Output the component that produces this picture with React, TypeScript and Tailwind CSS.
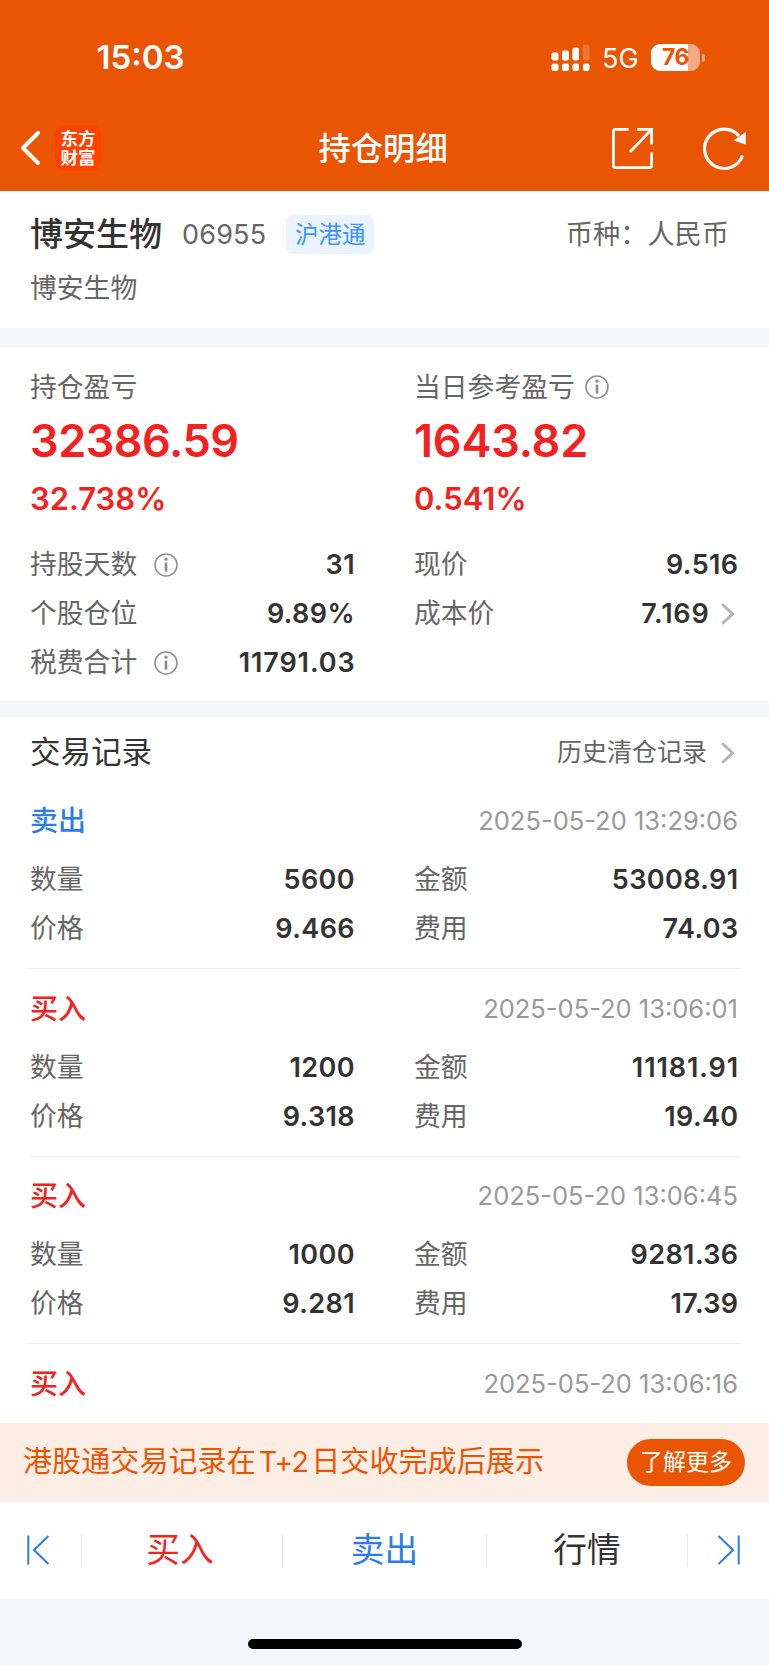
import type { ReactNode } from 'react';

type Trade = {
  side: 'buy' | 'sell';
  time: string;
  qty?: string;
  amount?: string;
  price?: string;
  fee?: string;
};

const trades: Trade[] = [
  { side: 'sell', time: '2025-05-20 13:29:06', qty: '5600', amount: '53008.91', price: '9.466', fee: '74.03' },
  { side: 'buy', time: '2025-05-20 13:06:01', qty: '1200', amount: '11181.91', price: '9.318', fee: '19.40' },
  { side: 'buy', time: '2025-05-20 13:06:45', qty: '1000', amount: '9281.36', price: '9.281', fee: '17.39' },
  { side: 'buy', time: '2025-05-20 13:06:16' },
];

function InfoIcon() {
  return (
    <svg width="24" height="24" viewBox="0 0 24 24" fill="none" stroke="#8c8c8c">
      <circle cx="12" cy="12" r="11" strokeWidth="1.5" />
      <path d="M12 9.6v9" strokeWidth="2.6" />
      <circle cx="12" cy="6.2" r="1.6" fill="#8c8c8c" stroke="none" />
    </svg>
  );
}

function Chevron() {
  return (
    <svg width="14" height="22" viewBox="0 0 14 22" fill="none" stroke="#b3b3b3" strokeWidth="2.8" strokeLinecap="round">
      <path d="M2 2l9.6 9L2 20" />
    </svg>
  );
}

// Values with many narrow "1" digits get wider tracking so they stay legible.
function trackingFor(value: string) {
  const ones = value.split('1').length - 1;
  return ones >= 3 ? 'tracking-[0.9px] -mr-[0.5px]' : 'tracking-[0.4px]';
}

function Field({ label, value, info, link }: { label: string; value: string; info?: boolean; link?: boolean }) {
  return (
    <div className="flex h-[49px] items-center">
      <span className="text-[26.8px] text-[#666]">{label}</span>
      {info && (
        <span className="ml-[17px]">
          <InfoIcon />
        </span>
      )}
      <span className={`ml-auto text-[27px] font-semibold text-[#333] ${link ? 'tracking-[0.8px]' : trackingFor(value)}`}>{value}</span>
      {link && (
        <span className="mr-[4px] ml-[11px]">
          <Chevron />
        </span>
      )}
    </div>
  );
}

function Columns({ left, right }: { left: ReactNode; right: ReactNode }) {
  return (
    <div className="grid grid-cols-[325px_324.5px] gap-x-[59px] pl-[30px]">
      <div>{left}</div>
      <div>{right}</div>
    </div>
  );
}

function TradeRow({ trade }: { trade: Trade }) {
  const color = trade.side === 'buy' ? 'text-[#f52121]' : 'text-[#2b7de9]';
  return (
    <div className="h-[187.5px] shrink-0">
      <div className="flex h-[81px] items-center justify-between pt-[13px] pr-[31px] pl-[30px]">
        <span className={`text-[28px] font-medium ${color}`}>{trade.side === 'buy' ? '买入' : '卖出'}</span>
        <span className="text-[25.5px] text-[#999]">{trade.time}</span>
      </div>
      {trade.qty && trade.amount && trade.price && trade.fee && (
        <>
          <Columns
            left={
              <>
                <Field label="数量" value={trade.qty} />
                <Field label="价格" value={trade.price} />
              </>
            }
            right={
              <>
                <Field label="金额" value={trade.amount} />
                <Field label="费用" value={trade.fee} />
              </>
            }
          />
          <div className="mx-[29px] mt-[15px] h-px bg-[#eeeeee]" />
        </>
      )}
    </div>
  );
}

function StatusBar() {
  return (
    <div className="flex h-[115px] items-center pl-[96.5px] text-white">
      <span className="text-[33px] font-semibold">15:03</span>
      <svg className="ml-auto" width="39" height="28" viewBox="0 0 39 28" fill="#fff">
        <rect x="0.5" y="8.5" width="7" height="8" rx="2" />
        <rect x="11" y="6.5" width="7" height="10" rx="2" />
        <rect x="21.5" y="3.5" width="6.5" height="13" rx="2" />
        <rect x="32" y="0.5" width="6.5" height="16" rx="2" fillOpacity="0.2" />
        <rect x="0.5" y="19.5" width="7" height="7.5" rx="2" />
        <rect x="11" y="19.5" width="7" height="7.5" rx="2" />
        <rect x="21.5" y="19.5" width="6.5" height="7.5" rx="2" />
        <rect x="32" y="19.5" width="6.5" height="7.5" rx="2" />
      </svg>
      <span className="mt-[2px] ml-[12px] w-[37px] text-[27px]">5G</span>
      <div className="mr-[64px] ml-[12px] flex items-center">
        <div className="flex h-[27px] w-[49px] items-center justify-center overflow-hidden rounded-[9px] bg-[linear-gradient(90deg,#fff_76%,#f4aa82_76%)] text-[23px] font-bold tracking-[-0.5px] text-[#ea5504]">
          76
        </div>
        <div className="ml-[2px] h-[8px] w-[3px] rounded-r-full bg-[#f4aa82]" />
      </div>
    </div>
  );
}

function NavBar() {
  return (
    <div className="flex h-[76px] items-start text-white">
      <svg className="mt-[15px] ml-[20px]" width="22" height="36" viewBox="0 0 22 36" fill="none" stroke="#fff" strokeWidth="4" strokeLinecap="round" strokeLinejoin="round">
        <path d="M18 3L3 18l15 15" />
      </svg>
      <div className="mt-[10px] ml-[13px] flex h-[46px] w-[46px] flex-col items-center justify-center rounded-[9px] bg-[#ff4200] text-[17.5px] leading-[19px] font-bold">
        <span>东方</span>
        <span>财富</span>
      </div>
      <h1 className="ml-[217.5px] flex h-[68px] items-center text-[32.3px] font-medium">持仓明细</h1>
      <svg className="mt-[12px] ml-auto" width="43" height="43" viewBox="0 0 43 43" fill="none" stroke="#fff" strokeWidth="2.8">
        <path d="M17.5 2.4H4.4a2 2 0 0 0-2 2v34.2a2 2 0 0 0 2 2h34.2a2 2 0 0 0 2-2V25.5" />
        <path d="M26 2.4h14.6v15M40.6 2.4L19 25" />
      </svg>
      <svg className="mt-[11px] mr-[22.5px] ml-[47.5px]" width="45" height="45" viewBox="0 0 45 45" fill="none" stroke="#fff" strokeWidth="3.2">
        <path d="M40.6 29.5A19.6 19.6 0 1 1 37 10" />
        <path d="M43.8 6v12.4L31.6 14.6z" fill="#fff" stroke="none" />
      </svg>
    </div>
  );
}

export default function App() {
  return (
    <div className="flex h-[1665px] w-[769px] flex-col overflow-hidden bg-[#f6f7fa] font-['Inter','Noto_Sans_CJK_SC',sans-serif] leading-none whitespace-nowrap">
      <header className="h-[191px] shrink-0 bg-[#ea5504]">
        <StatusBar />
        <NavBar />
      </header>

      <section className="h-[137px] shrink-0 bg-white pt-[19px] pr-[40px] pl-[30px]">
        <div className="flex h-[49px] items-center">
          <span className="text-[33px] font-medium text-[#333]">博安生物</span>
          <span className="ml-[20px] text-[27px] tracking-[0.2px] text-[#666]">06955</span>
          <span className="ml-[20px] flex h-[39px] w-[88px] items-center justify-center rounded-[7px] bg-[#eaf3ff] text-[23.5px] text-[#3c96ff]">沪港通</span>
          <span className="ml-auto text-[27.2px] text-[#666]">币种：人民币</span>
        </div>
        <div className="flex h-[58px] items-center text-[26.8px] text-[#666]">博安生物</div>
      </section>

      <section className="mt-[19px] h-[354px] shrink-0 bg-white pt-[16px]">
        <Columns
          left={
            <>
              <div className="flex h-[48px] items-center text-[26.8px] text-[#666]">持仓盈亏</div>
              <div className="flex h-[59px] items-center text-[45px] font-semibold tracking-[-0.5px] text-[#f52121]">32386.59</div>
              <div className="flex h-[56px] items-center text-[31px] font-semibold text-[#f52121]">32.738%</div>
            </>
          }
          right={
            <>
              <div className="flex h-[48px] items-center text-[26.8px] text-[#666]">
                当日参考盈亏
                <span className="ml-[10px]">
                  <InfoIcon />
                </span>
              </div>
              <div className="flex h-[59px] items-center text-[45px] font-semibold tracking-[-0.2px] text-[#f52121]">1643.82</div>
              <div className="flex h-[56px] items-center text-[31px] font-semibold text-[#f52121]">0.541%</div>
            </>
          }
        />
        <div className="mt-[14px]">
          <Columns
            left={
              <>
                <Field label="持股天数" value="31" info />
                <Field label="个股仓位" value="9.89%" />
                <Field label="税费合计" value="11791.03" info />
              </>
            }
            right={
              <>
                <Field label="现价" value="9.516" />
                <Field label="成本价" value="7.169" link />
              </>
            }
          />
        </div>
      </section>

      <section className="mt-[16px] flex h-[705.5px] shrink-0 flex-col overflow-hidden bg-white">
        <div className="flex h-[71px] shrink-0 items-center pr-[34.5px] pl-[30px]">
          <h2 className="text-[30.5px] text-[#333]">交易记录</h2>
          <span className="mr-[13.5px] ml-auto text-[25px] text-[#666]">历史清仓记录</span>
          <Chevron />
        </div>
        <div className="-mt-[14px]">
          {trades.map((trade) => (
            <TradeRow key={trade.time} trade={trade} />
          ))}
        </div>
      </section>

      <div className="flex h-[79px] shrink-0 items-center justify-between bg-[#fdeee5] pr-[24px] pl-[23px]">
        <span className="text-[29.1px] text-[#ea5504]">
          港股通交易记录在<span className="mx-[3px] text-[28.5px] tracking-[-0.7px]">T+2</span>日交收完成后展示
        </span>
        <button className="h-[47px] w-[118px] rounded-full bg-[#ea5504] text-[23px] text-white">了解更多</button>
      </div>

      <nav className="flex h-[97px] shrink-0 items-center bg-white text-[33.7px]">
        <div className="flex w-[81px] justify-start pl-[26px]">
          <svg width="24" height="30" viewBox="0 0 24 30" fill="none" stroke="#2b7de9" strokeWidth="2">
            <path d="M2.3.5v29M22.5 1L8 15l14.5 14" />
          </svg>
        </div>
        <div className="h-[33px] w-px bg-[#e9e9e9]" />
        <div className="flex w-[200px] justify-center pr-[4px] text-[#f52121]">买入</div>
        <div className="h-[33px] w-px bg-[#e9e9e9]" />
        <div className="flex w-[203px] justify-center text-[#2b7de9]">卖出</div>
        <div className="h-[33px] w-px bg-[#e9e9e9]" />
        <div className="flex w-[200px] justify-center text-[#333]">行情</div>
        <div className="h-[33px] w-px bg-[#e9e9e9]" />
        <div className="flex flex-1 justify-end pr-[28px]">
          <svg width="24" height="30" viewBox="0 0 24 30" fill="none" stroke="#2b7de9" strokeWidth="2">
            <path d="M21.7.5v29M1.5 1L16 15 1.5 29" />
          </svg>
        </div>
      </nav>

      <footer className="flex flex-1 items-end justify-center pb-[16px]">
        <div className="h-[10px] w-[274px] rounded-full bg-black" />
      </footer>
    </div>
  );
}
